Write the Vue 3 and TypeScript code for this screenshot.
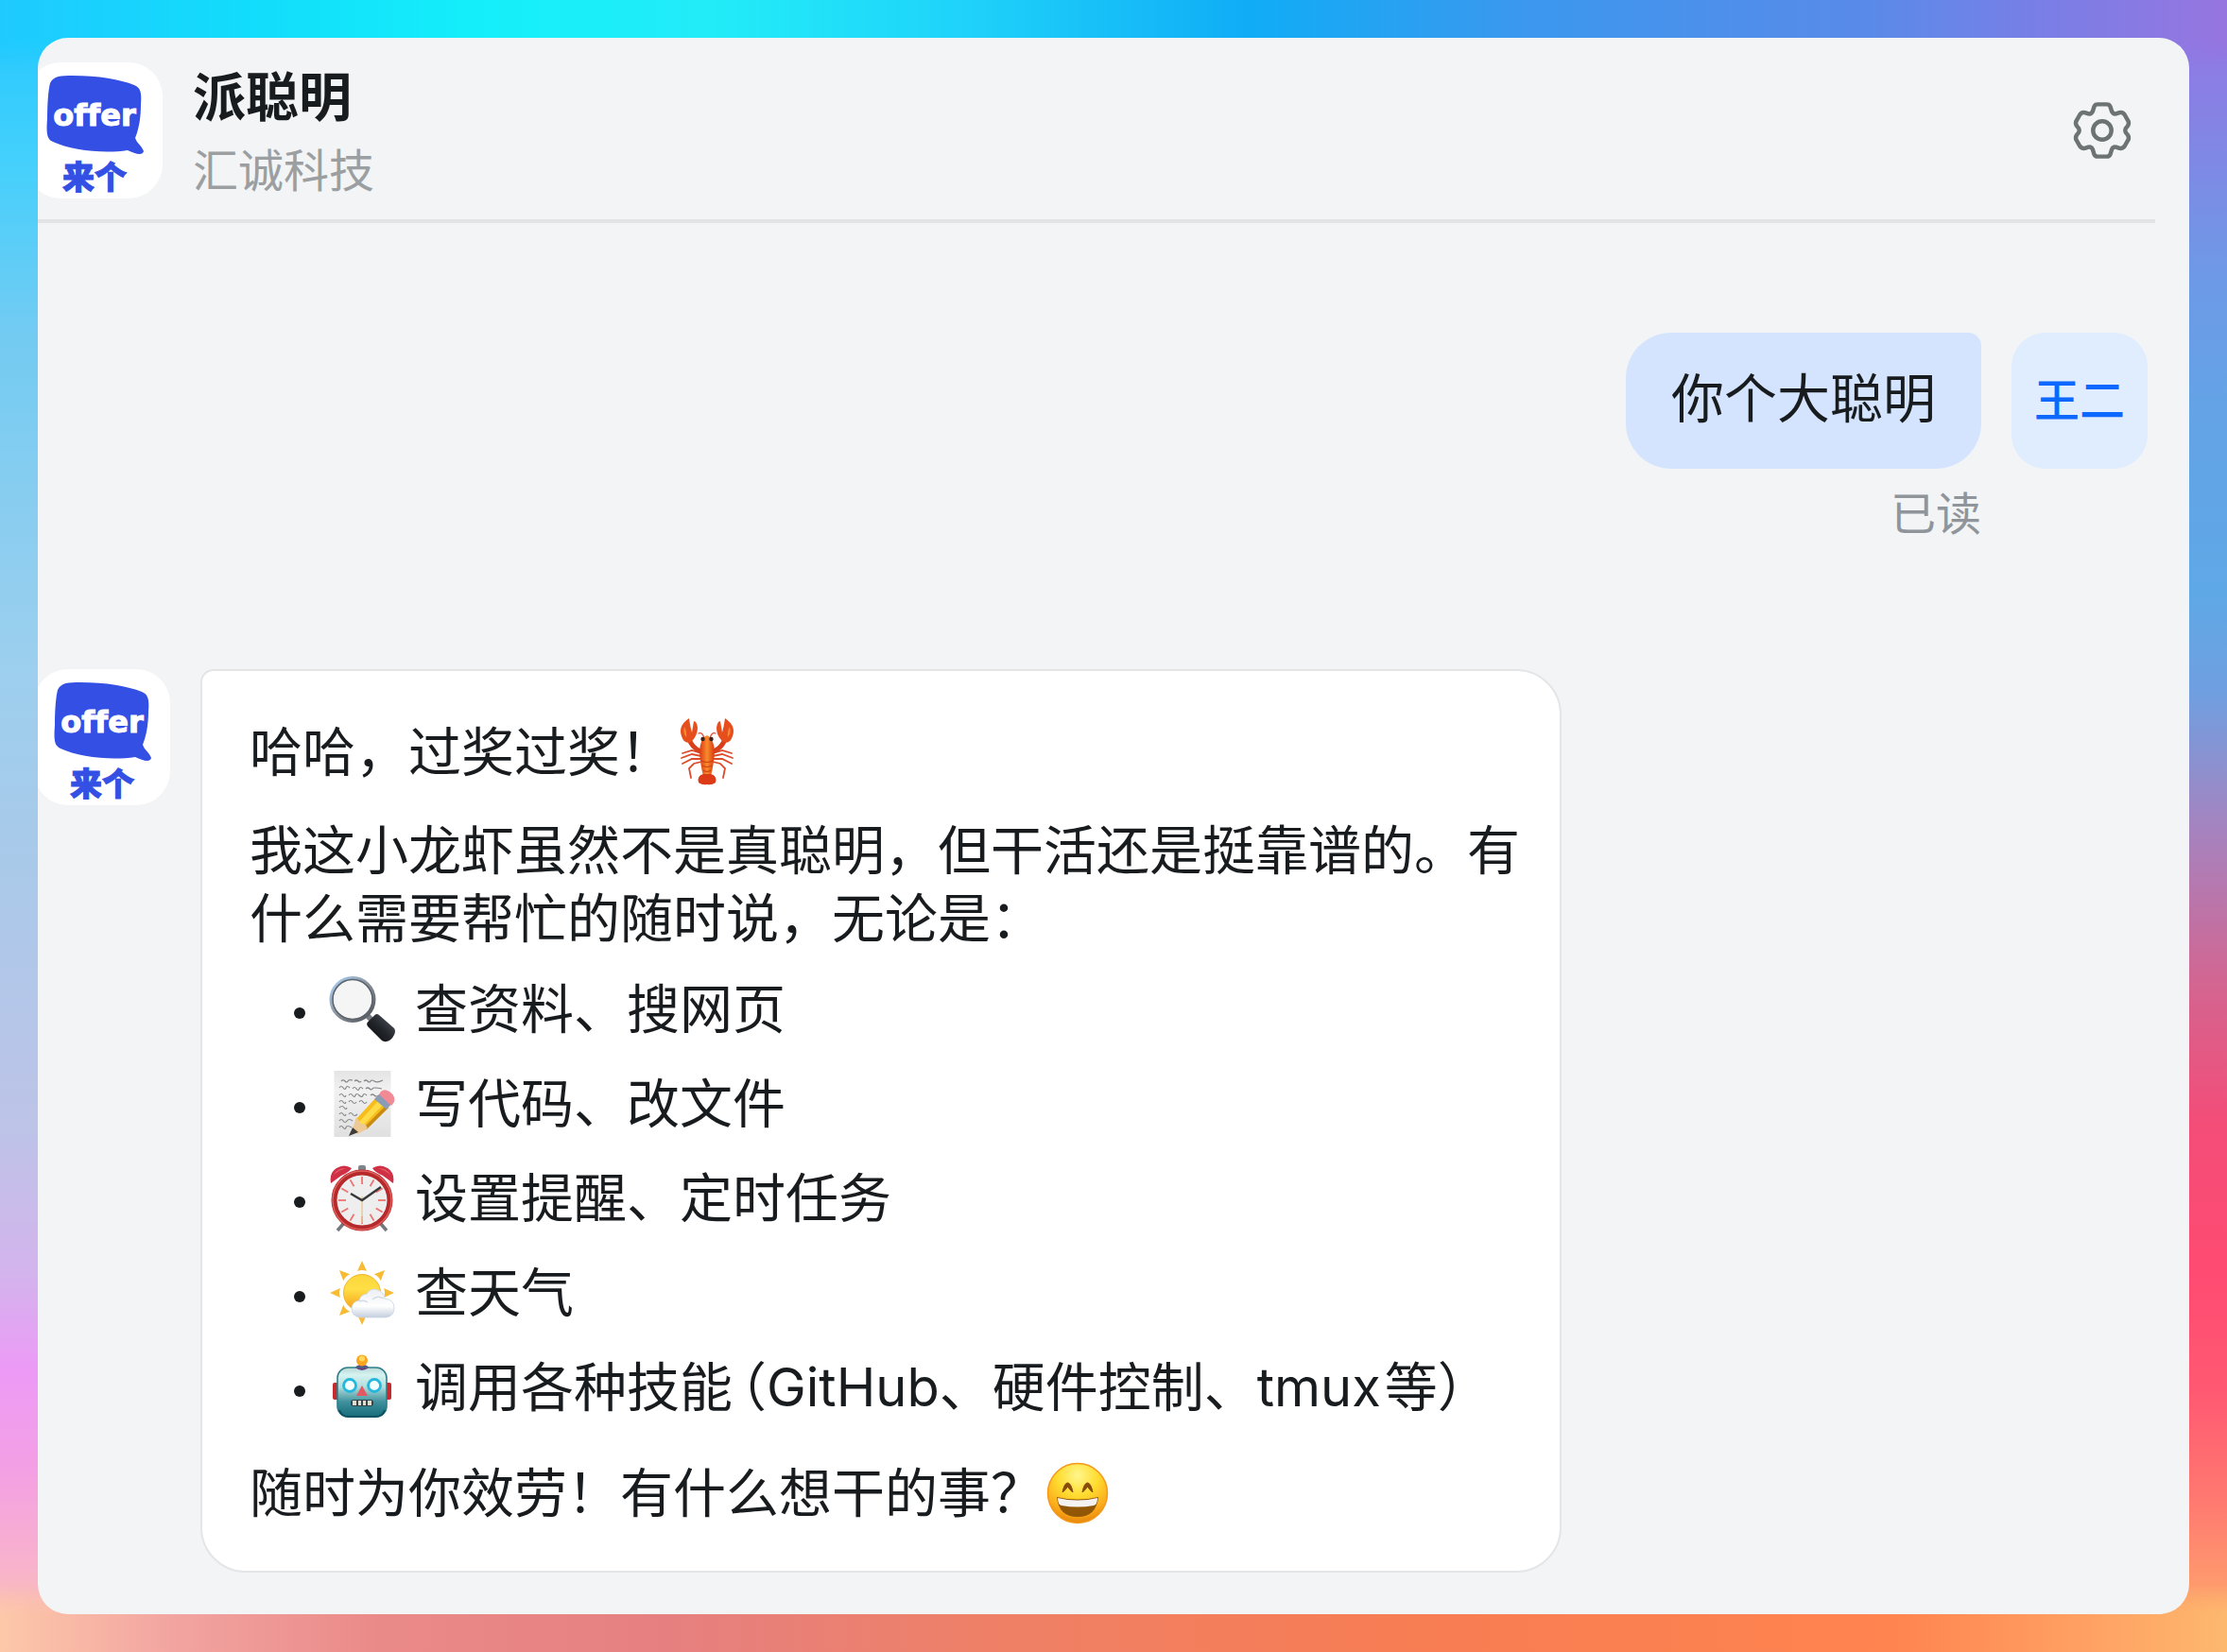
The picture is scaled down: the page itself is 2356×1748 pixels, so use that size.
<script setup lang="ts">
type EmojiName = 'search' | 'memo' | 'clock' | 'weather' | 'robot'

interface Part {
  text: string
  kind?: 'paren' | 'latin'
}

interface Skill {
  icon: EmojiName
  label: string
  parts: Part[]
}

const skills: Skill[] = [
  { icon: 'search', label: '放大镜', parts: [{ text: '查资料、搜网页' }] },
  { icon: 'memo', label: '备忘录', parts: [{ text: '写代码、改文件' }] },
  { icon: 'clock', label: '闹钟', parts: [{ text: '设置提醒、定时任务' }] },
  { icon: 'weather', label: '多云', parts: [{ text: '查天气' }] },
  {
    icon: 'robot',
    label: '机器人',
    parts: [
      { text: '调用各种技能' },
      { text: '（', kind: 'paren' },
      { text: 'GitHub、硬件控制、' },
      { text: 'tmux', kind: 'latin' },
      { text: '等）' },
    ],
  },
]

const bubblePath =
  'M25 22 C29 14 36 14 49 14 C76 14 99 18 114 24 C121 27 122 32 121 45 C121 58 119 70 115 80 C117 86 122 88 124 94 C123 99 115 97 107 93 C82 97 47 93 28 84 C21 81 21 74 22 59 C22 44 23 30 25 22 Z'

const ticks = Array.from({ length: 12 }, (_, i) => i * 30)
const rays = Array.from({ length: 8 }, (_, i) => i * 45)
</script>

<template>
  <div class="backdrop">
    <main class="panel">
      <header class="header">
        <div class="bot-avatar in-header">
          <svg class="logo-shape" viewBox="0 0 144 90" aria-hidden="true">
            <path fill="#3450e4" :d="bubblePath" />
          </svg>
          <span class="logo-en">offer</span>
          <span class="logo-zh">来个</span>
        </div>
        <div class="titles">
          <h1>派聪明</h1>
          <p>汇诚科技</p>
        </div>
        <button class="settings" type="button" aria-label="设置">
          <svg viewBox="-1 -1 66 66" fill="none" stroke="#6d7275" stroke-width="4.6" stroke-linejoin="round">
            <path
              d="M27 3.500 H37 Q40 3.500 41 6.500 L42.500 11.500 Q44 14.500 47 13.800 L51 12.500 Q54.500 12 56.500 15 L60.500 22 Q61.500 25 59.500 27.500 Q54.500 32 59.500 36.500 Q61.500 39 60.500 42 L56.500 49 Q54.500 52 51 51.500 L47 50.200 Q44 49.500 42.500 52.500 L41 57.500 Q40 60.500 37 60.500 H27 Q24 60.500 23 57.500 L21.500 52.500 Q20 49.500 17 50.200 L13 51.500 Q9.500 52 7.500 49 L3.500 42 Q2.500 39 4.500 36.500 Q9.500 32 4.500 27.500 Q2.500 25 3.500 22 L7.500 15 Q9.500 12 13 12.500 L17 13.800 Q20 14.500 21.500 11.500 L23 6.500 Q24 3.500 27 3.500 Z"
            />
            <circle cx="32" cy="32" r="10" />
          </svg>
        </button>
      </header>

      <section class="chat">
        <article class="message mine">
          <div class="stack">
            <p class="bubble">你个大聪明</p>
            <span class="status">已读</span>
          </div>
          <div class="user-avatar">王二</div>
        </article>

        <article class="message theirs">
          <div class="bot-avatar">
            <svg class="logo-shape" viewBox="0 0 144 90" aria-hidden="true">
              <path fill="#3450e4" :d="bubblePath" />
            </svg>
            <span class="logo-en">offer</span>
            <span class="logo-zh">来个</span>
          </div>
          <div class="reply">
            <p>
              哈哈，过奖过奖！<svg class="emoji" viewBox="0 0 72 72" role="img" aria-label="龙虾">
                <defs>
                  <linearGradient id="lob" x1="0" x2="1">
                    <stop offset="0" stop-color="#d93a14" />
                    <stop offset="0.5" stop-color="#f98a2b" />
                    <stop offset="1" stop-color="#d93a14" />
                  </linearGradient>
                </defs>
                <g fill="none" stroke="#dc4a2c" stroke-width="1.800" stroke-linecap="round">
                  <path d="M30 37 L20 34 L10 37 M30 40 L20 38 L9 42 M30 43 L20 43 L10 48 M30 46 L22 48 L17 53 L19 63" />
                  <path d="M42 37 L52 34 L62 37 M42 40 L52 38 L63 42 M42 43 L52 43 L62 48 M42 46 L50 48 L55 53 L53 63" />
                  <path d="M33 21 Q31 14 27 16 M39 21 Q41 14 45 16" stroke-width="1.200" />
                </g>
                <g fill="none" stroke="#d8401c" stroke-width="5" stroke-linecap="round">
                  <path d="M17 22 Q20 31 29 35 M55 22 Q52 31 43 35" />
                </g>
                <path fill="#e64e1e" d="M17 0 Q5 8 9 19 Q12 28 19 25 Q26 19 26 10 Q25 3 22 3 L20 15 Q18 8 17 0 Z" />
                <path fill="#e64e1e" d="M55 0 Q67 8 63 19 Q60 28 53 25 Q46 19 46 10 Q47 3 50 3 L52 15 Q54 8 55 0 Z" />
                <path fill="#f58a35" d="M12 9 Q10 16 14 20 Q15 14 12 9 Z M60 9 Q62 16 58 20 Q57 14 60 9 Z" />
                <path fill="url(#lob)" d="M36 18 Q43 21 44 35 Q43 50 40 61 H32 Q29 50 28 35 Q29 21 36 18 Z" />
                <path d="M30 45 Q36 48 42 45 M31 50 Q36 53 41 50 M32 55 Q36 58 40 55" fill="none" stroke="#cf4315" stroke-width="1.200" />
                <path fill="#dd3a17" d="M32 59 H40 Q47 61 45 68 Q41 71 36 70 Q31 71 27 68 Q25 61 32 59 Z" />
                <circle cx="31.500" cy="22" r="2.200" fill="#39241d" />
                <circle cx="40.500" cy="22" r="2.200" fill="#39241d" />
              </svg>
            </p>
            <p>我这小龙虾虽然不是真聪明，但干活还是挺靠谱的。有什么需要帮忙的随时说，无论是：</p>

            <ul>
              <li v-for="skill in skills" :key="skill.icon">
                <svg class="emoji" viewBox="0 0 72 72" role="img" :aria-label="skill.label">
                  <template v-if="skill.icon === 'search'">
                    <defs>
                      <linearGradient id="rim" x1="0" y1="0" x2="1" y2="1">
                        <stop offset="0" stop-color="#a9d0f7" />
                        <stop offset="0.5" stop-color="#8a929c" />
                        <stop offset="1" stop-color="#4b4e55" />
                      </linearGradient>
                      <linearGradient id="grip" x1="1" y1="0" x2="0" y2="1">
                        <stop offset="0" stop-color="#5b6068" />
                        <stop offset="0.5" stop-color="#23262b" />
                        <stop offset="1" stop-color="#050608" />
                      </linearGradient>
                    </defs>
                    <path d="M42 43 L49 50" stroke="#777c84" stroke-width="6" />
                    <path d="M41.500 50 L50 41.500 Q52 40.500 54 42 L70 56 Q72 59 70 63 Q67 69 62 70 Q59 70.500 57 69 L42 54 Q40.500 52 41.500 50 Z" fill="url(#grip)" />
                    <circle cx="26" cy="25.500" r="22.500" fill="#f5f5f6" stroke="url(#rim)" stroke-width="4" />
                    <circle cx="26" cy="25.500" r="21" fill="none" stroke="#5d636b" stroke-width="1.500" />
                  </template>
                  <template v-else-if="skill.icon === 'memo'">
                    <defs>
                      <linearGradient id="sheet" x1="0" y1="0" x2="0" y2="1">
                        <stop offset="0" stop-color="#e3e4e3" />
                        <stop offset="0.300" stop-color="#f1f1f1" />
                        <stop offset="1" stop-color="#e0e0e0" />
                      </linearGradient>
                    </defs>
                    <rect x="6.500" y="1" width="60" height="70" fill="url(#sheet)" />
                    <path
                      d="M14 12 q2 -2 4 0 t3 0 t5 -1 M28 12 q2 -2 4 0 t3 0 M38 12 q2 -2 4 0 t3 0 t4 0 t9 -1 M12 19 q2 -3 4 0 t3 0 t4 0 M26 20 q2 -3 4 0 t3 0 t4 0 M40 20 q2 -2 4 0 t3 0 t10 0 M12 27 q2 -3 4 0 t3 0 M22 27 q2 -3 4 0 t3 0 t4 0 t4 0 t4 0 M45 27 q2 -2 4 0 t5 0 M12 34 q2 -3 4 0 t3 0 M22 34 q2 -3 4 0 t4 0 M33 34 q2 -3 4 0 t4 0 M12 40 q3 -3 5 0 t3 0 M12 47 q2 -3 4 0 t3 0 M22 47 q2 -3 4 0 t5 0 M12 54 q2 -3 4 0 t4 0 t6 0 M12 61 q2 -3 4 0 t3 0 t6 0"
                      fill="none" stroke="#85878a" stroke-width="1.200"
                    />
                    <path d="M51 29 L64 40 L40 63 L26 68 L30 52 Z" fill="#f7bd1b" />
                    <path d="M54 32 L59 36 L36 60 L32 56 Z" fill="#ffdb48" />
                    <path d="M61 38 L64 40 L41 63 L37 62 Z" fill="#c98a12" />
                    <path d="M30 50 L26 63 L31 68 L42 62 L39 57 L35 57 Z" fill="#edc995" />
                    <path d="M26 61 L22 70 L32 66 Z" fill="#3f3b39" />
                    <path d="M55 25 L67 36 L62 42 L49 31 Z" fill="#8b9cb4" />
                    <path d="M55 24 Q59 19 65 23 Q72 28 70 34 L67 38 L55 27 Z" fill="#f18a94" />
                  </template>
                  <template v-else-if="skill.icon === 'clock'">
                    <path d="M17 62 L10 70 M55 62 L62 70" stroke="#74777c" stroke-width="3.500" />
                    <rect x="32" y="1" width="8" height="6" rx="2" fill="#7f858c" />
                    <path fill="#cf3045" d="M3 20 Q1 9 9 4 Q17 -1 25 4 Q23 8 14 12 Q7 17 3 20 Z M69 20 Q71 9 63 4 Q55 -1 47 4 Q49 8 58 12 Q65 17 69 20 Z" />
                    <path fill="#e4606c" d="M6 11 Q10 4 19 4 Q12 6 6 11 Z M66 11 Q62 4 53 4 Q60 6 66 11 Z" />
                    <circle cx="36" cy="38" r="29.500" fill="#eeeeee" stroke="#b62a2c" stroke-width="6" />
                    <circle cx="36" cy="38" r="31" fill="none" stroke="#df5f5d" stroke-width="1.500" />
                    <g stroke="#ed7371" stroke-width="1.800">
                      <path v-for="angle in ticks" :key="angle" d="M36 13 V21" :transform="`rotate(${angle} 36 38)`" />
                    </g>
                    <path d="M36 34 V62" stroke="#e6c99b" stroke-width="1.400" />
                    <path d="M24 31 L36 38 L56 24" fill="none" stroke="#36383a" stroke-width="2.400" />
                  </template>
                  <template v-else-if="skill.icon === 'weather'">
                    <defs>
                      <linearGradient id="sun" x1="0" y1="0" x2="0" y2="1">
                        <stop offset="0" stop-color="#fbd63c" />
                        <stop offset="0.400" stop-color="#ffdf45" />
                        <stop offset="1" stop-color="#f79a19" />
                      </linearGradient>
                      <linearGradient id="cloud" x1="0" y1="0" x2="0" y2="1">
                        <stop offset="0" stop-color="#eceff5" />
                        <stop offset="0.600" stop-color="#ffffff" />
                        <stop offset="1" stop-color="#c3cedd" />
                      </linearGradient>
                    </defs>
                    <g fill="#f8bb35">
                      <path v-for="angle in rays" :key="angle" d="M36 2 L41 13 Q36 11 31 13 Z" :transform="`rotate(${angle} 36 36)`" />
                    </g>
                    <circle cx="36" cy="36" r="19.500" fill="url(#sun)" stroke="#f1b42c" stroke-width="1" />
                    <path fill="url(#cloud)" stroke="#cdd5e0" stroke-width="0.800" d="M34 62 Q25 61 25 52 Q26 45 33 44 Q34 38 41 37 Q45 30 53 33 Q59 35 60 42 Q70 43 70 52 Q70 61 61 62 Z" />
                    <path d="M33 45 Q38 43 42 46 M47 43 Q52 38 59 42" fill="none" stroke="#d4dbe4" stroke-width="1.400" />
                  </template>
                  <template v-else>
                    <defs>
                      <linearGradient id="bot" x1="0" y1="0" x2="0" y2="1">
                        <stop offset="0" stop-color="#b8d6d3" />
                        <stop offset="0.150" stop-color="#d5f3f1" />
                        <stop offset="0.400" stop-color="#b0dcdc" />
                        <stop offset="0.700" stop-color="#3d909c" />
                        <stop offset="1" stop-color="#176c7b" />
                      </linearGradient>
                    </defs>
                    <rect x="5" y="31" width="8" height="18" rx="2" fill="#c42a2e" />
                    <rect x="59" y="31" width="8" height="18" rx="2" fill="#c42a2e" />
                    <path d="M28 17 Q29 12 36 12 Q43 12 44 17 Z" fill="#654480" />
                    <circle cx="36" cy="7.500" r="6" fill="#fba51e" />
                    <circle cx="36" cy="5.500" r="3" fill="#ffd95c" />
                    <rect x="10" y="15" width="52" height="52" rx="11" fill="url(#bot)" stroke="#2f7f8b" stroke-width="1.600" />
                    <path d="M29 15 Q36 21 43 15 Z" fill="#654480" />
                    <path d="M12 60 Q14 67 22 67 H50 Q58 67 60 60" fill="none" stroke="#0c5361" stroke-width="2" />
                    <circle cx="23" cy="34" r="6.500" fill="#f4ffff" stroke="#25b7dc" stroke-width="2.800" />
                    <circle cx="49" cy="34" r="6.500" fill="#f4ffff" stroke="#25b7dc" stroke-width="2.800" />
                    <path d="M36 34 L42 45 H30 Z" fill="#e25a61" />
                    <rect x="24" y="49" width="24" height="7" rx="3" fill="#33464b" />
                    <path d="M26 50 h4 v5 h-4 Z M32 50 h3 v5 h-3 Z M37 50 h3 v5 h-3 Z M42 50 h4 v5 h-4 Z" fill="#e0ddce" />
                  </template>
                </svg>
                <span><span v-for="part in skill.parts" :key="part.text" :class="part.kind">{{ part.text }}</span></span>
              </li>
            </ul>

            <p>
              随时为你效劳！有什么想干的事？<svg class="emoji" viewBox="0 0 72 72" role="img" aria-label="笑脸">
                <defs>
                  <radialGradient id="face" cx="0.500" cy="0.200" r="0.850">
                    <stop offset="0" stop-color="#fff68c" />
                    <stop offset="0.400" stop-color="#ffdc30" />
                    <stop offset="0.750" stop-color="#fbab1b" />
                    <stop offset="1" stop-color="#e07a06" />
                  </radialGradient>
                </defs>
                <circle cx="36" cy="36" r="31.500" fill="url(#face)" stroke="#f4991b" stroke-width="1.500" />
                <path d="M20 35 Q22 25 25.500 25 Q29 25 31 35 Q28 33 25.500 29 Q23 33 20 35 Z M41 35 Q43 25 46.500 25 Q50 25 52 35 Q49 33 46.500 29 Q44 33 41 35 Z" fill="#8a4b0a" stroke="#8a4b0a" stroke-linejoin="round" />
                <path d="M14 40 Q36 45 58 40 Q56 61 36 61 Q16 61 14 40 Z" fill="#925607" />
                <path d="M15 41 Q36 46 57 41 Q57 48 53 49 Q36 52 19 49 Q15 48 15 41 Z" fill="#f4f3f1" />
              </svg>
            </p>
          </div>
        </article>
      </section>
    </main>
  </div>
</template>

<style>
body {
  margin: 0;
}
</style>

<style scoped>
.backdrop {
  position: relative;
  display: flex;
  box-sizing: border-box;
  min-height: 100vh;
  padding: 40px;
  font-family: Inter, "Noto Sans CJK SC", sans-serif;
  color: #181c1f;
  background:
    linear-gradient(#22c8ff 0%, #45d0fc 10%, #72cbf2 20%, #9ccfee 40%, #a9c9e9 52%, #bdc4e8 68%, #d3b4ec 77%, #ec9af6 83%, #f4a0e4 89%, #f8b3cb 95%, #fdc8a8 100%) left / 50% 100% no-repeat,
    linear-gradient(#9575e2 0%, #8880e4 6%, #6d9ae6 17%, #63a3e6 25%, #5fa8e6 36%, #709fe0 42%, #a484c0 50%, #d5648f 60%, #f34d78 68%, #ff4b72 77%, #ff5872 84%, #ff7a70 91%, #fdb46c 100%) right / 50% 100% no-repeat;
}

.backdrop::before,
.backdrop::after {
  position: absolute;
  left: 0;
  width: 100%;
  height: 72px;
  content: "";
}

.backdrop::before {
  top: 0;
  background: linear-gradient(90deg, #1fcaff 0%, #12dcfb 11%, #14effa 22%, #22ecf8 32%, #1fd3fa 43%, #10adf6 56%, #3a98ee 68%, #5a8ae9 84%, #7a7ee6 92%, #9775e0 100%);
  mask-image: linear-gradient(#000 56%, transparent);
}

.backdrop::after {
  bottom: 0;
  background: linear-gradient(90deg, #fdc8aa 0%, #f2a3a0 8%, #ea8a88 17%, #e68080 30%, #ef8066 45%, #f87d52 65%, #ff8450 85%, #ffa263 94%, #fdb86e 100%);
  mask-image: linear-gradient(transparent, #000 44%);
}

.panel {
  position: relative;
  z-index: 1;
  flex: 1;
  min-width: 0;
  overflow: hidden;
  background: #f2f4f6;
  border-radius: 32px;
}

.header {
  display: flex;
  align-items: center;
  box-sizing: border-box;
  height: 196px;
  margin-right: 36px;
  padding-right: 24px;
  border-bottom: 4px solid #e1e3e5;
}

.bot-avatar {
  position: relative;
  flex: none;
  width: 144px;
  height: 144px;
  overflow: hidden;
  color: #3450e4;
  text-align: center;
  background: #fff;
  border-radius: 36px;
}

.bot-avatar.in-header {
  margin: 4px 32px 0 -12px;
}

.logo-shape {
  display: block;
  width: 144px;
  height: 90px;
  overflow: visible;
}

.logo-en {
  position: absolute;
  top: 36px;
  left: 0;
  width: 100%;
  font-family: "DejaVu Sans", sans-serif;
  font-size: 32px;
  font-weight: 700;
  font-variant-ligatures: none;
  line-height: 40px;
  color: #fff;
  -webkit-text-stroke: 1px #fff;
}

.logo-zh {
  position: absolute;
  top: 102px;
  left: 0;
  width: 100%;
  font-size: 34px;
  font-weight: 900;
  line-height: 40px;
  -webkit-text-stroke: 1px #3450e4;
}

.titles {
  flex: 1;
  padding-top: 8px;
}

.titles h1,
.titles p,
.bubble,
.reply p,
.reply ul {
  margin: 0;
}

.titles h1 {
  padding-bottom: 2px;
  font-size: 56px;
  font-weight: 700;
  line-height: 80px;
}

.titles p {
  font-size: 48px;
  line-height: 72px;
  color: #9b9fa1;
}

.settings {
  width: 64px;
  height: 64px;
  margin-top: 4px;
  padding: 0;
  background: none;
  border: 0;
}

.settings svg {
  display: block;
}

.chat {
  display: flex;
  flex-direction: column;
  gap: 132px;
  padding: 116px 44px 44px 0;
}

.message {
  display: flex;
  align-items: flex-start;
  gap: 32px;
}

.mine {
  justify-content: flex-end;
}

.stack {
  display: flex;
  flex-direction: column;
  align-items: flex-end;
  gap: 16px;
}

.bubble {
  padding: 34px 48px 38px;
  font-size: 56px;
  line-height: 72px;
  background: #d4e4ff;
  border-radius: 48px 14px 48px 48px;
}

.status {
  font-size: 48px;
  line-height: 64px;
  color: #8f959a;
}

.user-avatar {
  width: 144px;
  height: 144px;
  font-size: 48px;
  font-weight: 500;
  line-height: 144px;
  color: #0c68ff;
  text-align: center;
  background: #e0edff;
  border-radius: 36px;
}

.theirs {
  margin-left: -4px;
}

.reply {
  box-sizing: border-box;
  flex: 0 1 1440px;
  min-width: 0;
  padding: 50px 40px 46px 50px;
  font-size: 56px;
  line-height: 72px;
  background: #fff;
  border: 2px solid #e3e5e7;
  border-radius: 14px 48px 48px 48px;
}

.reply p + p {
  margin-top: 32px;
}

.reply ul {
  display: flex;
  flex-direction: column;
  gap: 28px;
  padding: 24px 0 40px 47px;
  list-style: none;
}

.reply li {
  display: flex;
  align-items: center;
}

.reply li::before {
  flex: none;
  width: 12px;
  height: 12px;
  margin: 8px 24px 0 0;
  content: "";
  background: #181c1f;
  border-radius: 50%;
}

.emoji {
  flex: none;
  width: 72px;
  height: 72px;
  vertical-align: top;
}

.reply li .emoji {
  margin-right: 20px;
}

/* Half-width opening bracket next to Latin text */
.paren {
  margin-left: 8px;
  font-feature-settings: "halt";
}

.latin {
  margin-right: 4px;
}
</style>
